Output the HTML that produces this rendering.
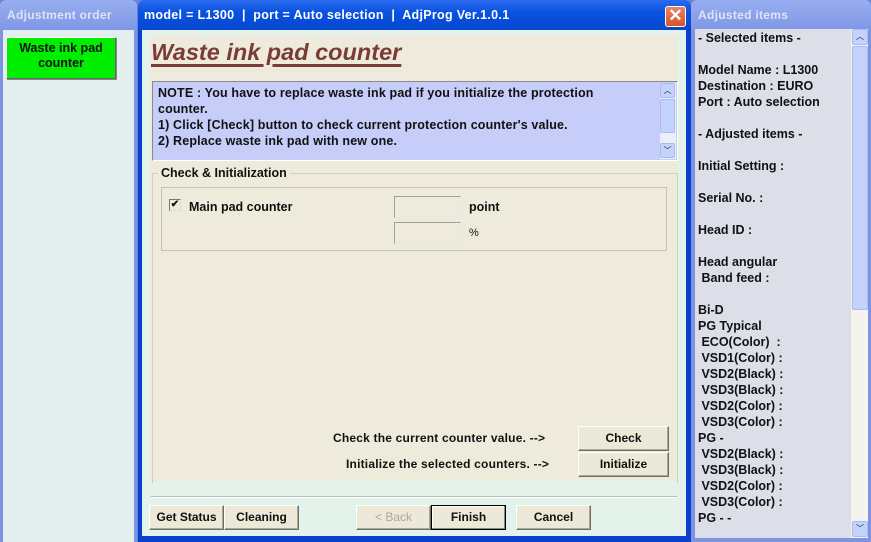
<!DOCTYPE html>
<html><head><meta charset="utf-8"><style>
*{margin:0;padding:0;box-sizing:border-box}
body{width:871px;height:542px;overflow:hidden;background:#6a82d6;font-family:"Liberation Sans",Arial,sans-serif;font-weight:bold;font-size:12px;color:#111;position:relative}
.abs{position:absolute}
.ptitle{background:linear-gradient(#98aef0,#7f97e6);color:#dde4f6;font-size:12px;padding:8px 0 0 7px;height:30px;letter-spacing:0.3px}
.btn{position:absolute;background:#ece9d8;border:1px solid;border-color:#fff #716f64 #716f64 #fff;box-shadow:inset -1px -1px 0 #aca899;text-align:center;font-size:12px;line-height:22px}
.sb{position:absolute;background:#f4f3ee}
.arr{position:absolute;width:15px;height:15px;background:#c4d3fb;border:1px solid #a8baf0;border-radius:2px;color:#4d6185;font-size:8px;text-align:center;line-height:13px}
.thumb{position:absolute;background:#c4d3fb;border:1px solid #a8baf0;border-radius:2px}
</style></head><body>
<!-- left panel -->
<div class="abs" style="left:0;top:0;width:137px;height:542px;background:#7d94e2;border-radius:6px 6px 0 0"></div>
<div class="abs ptitle" style="left:0;top:0;width:137px;border-radius:6px 6px 0 0">Adjustment order</div>
<div class="abs" style="left:3px;top:30px;width:131px;height:512px;background:#e2efee"></div>
<div class="abs" style="left:6px;top:37px;width:110px;height:42px;background:#00ee00;border:1px solid;border-color:#fff #666 #666 #fff;box-shadow:1px 1px 0 #888;text-align:center;font-size:12.5px;line-height:15px;padding-top:3px">Waste ink pad<br>counter</div>
<!-- main window -->
<div class="abs" style="left:138px;top:0;width:553px;height:542px;background:#0a3fcf;border-radius:7px 7px 0 0"></div>
<div class="abs" style="left:138px;top:0;width:553px;height:30px;background:linear-gradient(#2a6cf0,#0a52e0 40%,#0548d0);border-radius:7px 7px 0 0;color:#fff;font-size:12.5px;padding:8px 0 0 6px;letter-spacing:0.3px">model = L1300 &nbsp;|&nbsp; port = Auto selection &nbsp;|&nbsp; AdjProg Ver.1.0.1</div>
<div class="abs" style="left:665px;top:6px;width:21px;height:21px;background:linear-gradient(#e8846a,#d8522c);border:1px solid #fff;border-radius:3px;color:#fff;font-size:17px;line-height:18px;text-align:center;font-weight:bold">✕</div>
<div class="abs" style="left:142px;top:30px;width:544px;height:506px;background:#e3f2ea"></div>
<div class="abs" style="left:150px;top:35px;width:528px;height:446px;background:#efebdc"></div>
<div class="abs" style="left:151px;top:39px;font-size:23.5px;font-style:italic;color:#7a3c36;text-decoration:underline;text-decoration-thickness:3px;text-underline-offset:4px">Waste ink pad counter</div>
<!-- note -->
<div class="abs" style="left:152px;top:81px;width:526px;height:80px;background:#c5cdf8;border:1px solid;border-color:#8a8a8a #fff #fff #8a8a8a"></div>
<div class="abs" style="left:158px;top:85px;width:470px;font-size:12.5px;line-height:16px;color:#111;letter-spacing:0.15px">NOTE : You have to replace waste ink pad if you initialize the protection counter.<br>1) Click [Check] button to check current protection counter's value.<br>2) Replace waste ink pad with new one.</div>
<div class="sb" style="left:660px;top:83px;width:16px;height:76px;background:#eeeef8"></div>
<div class="arr" style="left:660px;top:83px">︿</div>
<div class="thumb" style="left:660px;top:99px;width:15px;height:34px"></div>
<div class="arr" style="left:660px;top:143px">﹀</div>
<!-- group -->
<div class="abs" style="left:152px;top:173px;width:526px;height:310px;border:1px solid #d0d0bf;border-bottom:none"></div>
<div class="abs" style="left:158px;top:166px;background:#efebdc;padding:0 3px;font-size:12.5px">Check &amp; Initialization</div>
<div class="abs" style="left:161px;top:187px;width:506px;height:64px;border:1px solid #c5c2b0"></div>
<div class="abs" style="left:169px;top:199px;width:12px;height:12px;border:1px solid #777;border-color:#777 #ddd #ddd #777;font-size:10px;line-height:10px;text-align:center">✔</div>
<div class="abs" style="left:189px;top:200px;font-size:12.5px">Main pad counter</div>
<div class="abs" style="left:394px;top:196px;width:67px;height:22px;border:1px solid;border-color:#a0a0a0 #e8e8e8 #e8e8e8 #a0a0a0"></div>
<div class="abs" style="left:394px;top:222px;width:67px;height:22px;border:1px solid;border-color:#a0a0a0 #e8e8e8 #e8e8e8 #a0a0a0"></div>
<div class="abs" style="left:469px;top:200px;font-size:12.5px">point</div>
<div class="abs" style="left:469px;top:227px;font-size:11px;font-weight:normal">%</div>
<div class="abs" style="left:333px;top:431px;font-size:12px;letter-spacing:0.2px">Check the current counter value. --&gt;</div>
<div class="abs" style="left:346px;top:457px;font-size:12px;letter-spacing:0.2px">Initialize the selected counters. --&gt;</div>
<div class="btn" style="left:578px;top:426px;width:91px;height:25px">Check</div>
<div class="btn" style="left:578px;top:452px;width:91px;height:25px">Initialize</div>
<div class="abs" style="left:151px;top:496px;width:526px;height:2px;border-top:1px solid #b5c0b8;border-bottom:1px solid #fff"></div>
<div class="btn" style="left:149px;top:505px;width:75px;height:25px">Get Status</div>
<div class="btn" style="left:224px;top:505px;width:75px;height:25px">Cleaning</div>
<div class="btn" style="left:356px;top:505px;width:75px;height:25px;color:#aca899;font-weight:normal">&lt; Back</div>
<div class="btn" style="left:431px;top:505px;width:75px;height:25px;border:1px solid #000;box-shadow:inset -1px -1px 0 #888,inset 1px 1px 0 #fff">Finish</div>
<div class="btn" style="left:516px;top:505px;width:75px;height:25px">Cancel</div>
<!-- right panel -->
<div class="abs" style="left:691px;top:0;width:180px;height:542px;background:#7d94e2;border-radius:6px 6px 0 0"></div>
<div class="abs ptitle" style="left:691px;top:0;width:180px;border-radius:6px 6px 0 0">Adjusted items</div>
<div class="abs" style="left:695px;top:29px;width:156px;height:509px;background:#dcdfe7"></div>
<div class="abs" style="left:698px;top:30px;font-size:12.5px;line-height:16px;white-space:pre">- Selected items -

Model Name : L1300
Destination : EURO
Port : Auto selection

- Adjusted items -

Initial Setting :

Serial No. :

Head ID :

Head angular
 Band feed :

Bi-D
PG Typical
 ECO(Color)  :
 VSD1(Color) :
 VSD2(Black) :
 VSD3(Black) :
 VSD2(Color) :
 VSD3(Color) :
PG -
 VSD2(Black) :
 VSD3(Black) :
 VSD2(Color) :
 VSD3(Color) :
PG - -</div>
<div class="sb" style="left:851px;top:29px;width:17px;height:509px;background:#f4f3ee"></div>
<div class="arr" style="left:852px;top:29px;width:16px;height:16px">︿</div>
<div class="thumb" style="left:852px;top:46px;width:16px;height:264px"></div>
<div class="arr" style="left:852px;top:521px;width:16px;height:16px">﹀</div>
</body></html>
